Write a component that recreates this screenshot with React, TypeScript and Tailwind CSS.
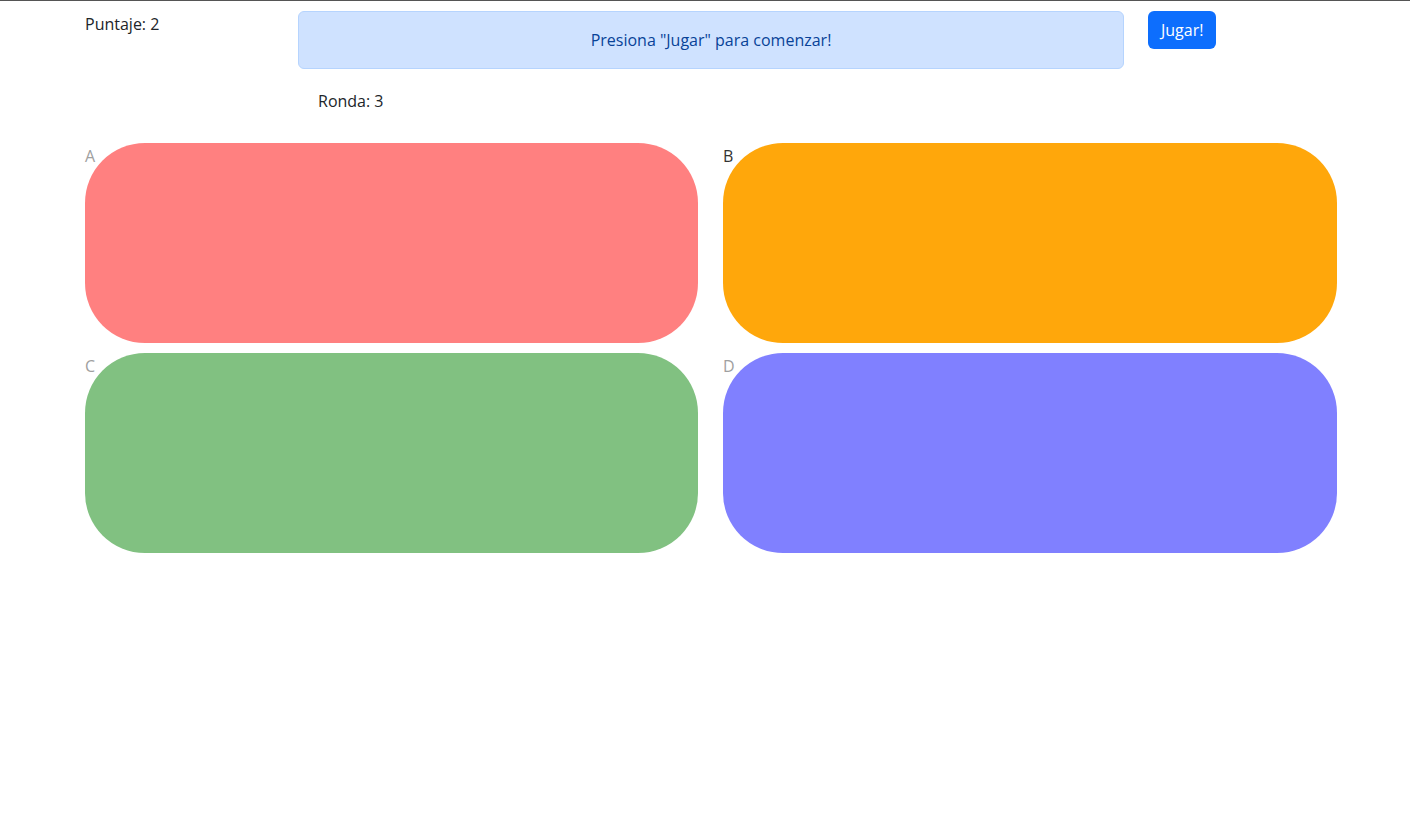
const cards = [
  { label: 'A', color: 'bg-[#ff8080]', text: 'text-[#a0a0a0]' },
  { label: 'B', color: 'bg-[#ffa70b]', text: 'text-[#333333]' },
  { label: 'C', color: 'bg-[#81c181]', text: 'text-[#a0a0a0]' },
  { label: 'D', color: 'bg-[#8080ff]', text: 'text-[#a0a0a0]' },
];

export default function App() {
  return (
    <div className="min-h-[828px] bg-white border-t border-[#555555] text-[#212529] text-base leading-6 font-['Open_Sans',_sans-serif]">
      <div className="pl-[85px] pr-[73px]">
        {/* header row */}
        <div className="flex items-start pt-[10px]">
          <div className="w-[213px] pt-[1px]">Puntaje: 2</div>
          <div className="w-[826px] h-[58px] flex items-center justify-center rounded-md border border-[#b6d4fe] bg-[#cfe2ff] text-[#084298]">
            Presiona "Jugar" para comenzar!
          </div>
          <button className="ml-[24px] h-[38px] px-[13px] rounded-md bg-[#0d6efd] text-white">
            Jugar!
          </button>
        </div>

        <div className="pl-[233px] mt-[20px]">Ronda: 3</div>

        {/* color pads */}
        <div className="grid grid-cols-[613px_614px] gap-x-[25px] gap-y-[10px] mt-[30px]">
          {cards.map((c) => (
            <div key={c.label} className="relative">
              <div className={`h-[200px] rounded-[60px] ${c.color}`} />
              <span className={`absolute top-[1px] left-0 ${c.text}`}>{c.label}</span>
            </div>
          ))}
        </div>
      </div>
    </div>
  );
}
